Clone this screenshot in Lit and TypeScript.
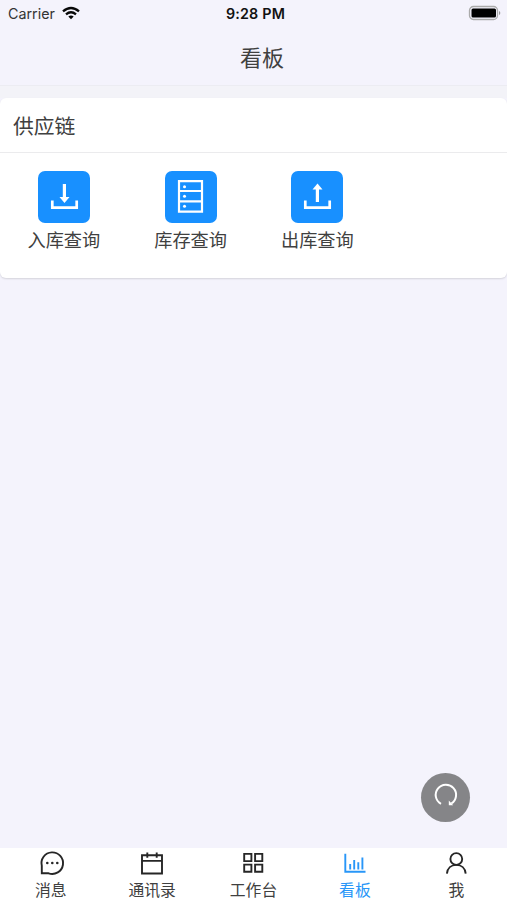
import { LitElement, html, svg, css } from "lit";
import { customElement } from "lit/decorators.js";
import { classMap } from "lit/directives/class-map.js";

const apps = [
  {
    label: "入库查询",
    icon: svg`<path d="M26.4 13v15" stroke-width="3.2"/><path d="M21.500 26h10L26.500 32z" fill="#fff" stroke="none"/><path d="M14.300 29.500v7.200h24.400v-7.200" stroke-width="2.700"/>`,
  },
  {
    label: "库存查询",
    icon: svg`<path d="M14 10.200h23v30.400h-23zM14 20h23M14 30.300h23" stroke-width="2.200"/><g fill="#fff" stroke="none"><circle cx="19.500" cy="15.700" r="1.500"/><circle cx="19.500" cy="25.300" r="1.500"/><circle cx="19.500" cy="35.200" r="1.500"/></g>`,
  },
  {
    label: "出库查询",
    icon: svg`<path d="M26.400 16v15" stroke-width="3.200"/><path d="M21.500 18.500h10L26.500 12.500z" fill="#fff" stroke="none"/><path d="M14.300 29.500v7.200h24.400v-7.200" stroke-width="2.700"/>`,
  },
];

const tabs = [
  {
    label: "消息",
    icon: svg`<path d="M4.800 23.300V15.800A10.800 10.800 0 1 1 11.600 23.300z"/><g fill="currentColor" stroke="none"><circle cx="10.300" cy="13" r="1.300"/><circle cx="15.300" cy="13" r="1.300"/><circle cx="20.300" cy="13" r="1.300"/></g>`,
  },
  {
    label: "通讯录",
    icon: svg`<path d="M4 5.300h20v18.200H4zM4 10.900h20M9.300 2.500v5.200M18.700 2.500v5.200"/>`,
  },
  {
    label: "工作台",
    icon: svg`<path d="M5.200 3.900h7.200v7.200H5.200zM16.100 3.900h7.200v7.200h-7.200zM5.200 14.600h7.200v7.200H5.200zM16.100 14.600h7.200v7.200h-7.200z"/>`,
  },
  {
    label: "看板",
    active: true,
    icon: svg`<path d="M4.300 3.800v17.900h20.200M9.200 14v5.500M13.200 10v9.500M17.300 12.200v7.300M21.400 7.500v12"/>`,
  },
  {
    label: "我",
    icon: svg`<circle cx="14.300" cy="9" r="5.900"/><path d="M4.900 23.700C5.400 18 9.300 14.900 14.300 14.900s8.900 3.100 9.400 8.800"/>`,
  },
];

@customElement("app-root")
export class AppRoot extends LitElement {
  static styles = css`
    :host {
      display: flex;
      flex-direction: column;
      position: relative;
      height: 900px;
      overflow: hidden;
      background: #f4f3fc;
      color: #404040;
      font-family: "Noto Sans CJK SC", sans-serif;
    }
    svg { display: block; fill: none; stroke: currentColor; }
    .status {
      display: grid;
      grid-template-columns: 1fr auto 1fr;
      align-items: center;
      height: 26px;
      padding: 0 6px 0 8px;
      box-sizing: border-box;
      font: 14.3px Inter, sans-serif;
    }
    .carrier { display: flex; align-items: center; gap: 7px; color: #333; }
    .time { font-weight: 600; color: #111; letter-spacing: 0.2px; padding-left: 2px; }
    .battery { justify-self: end; }
    .title {
      height: 60px;
      line-height: 60px;
      box-sizing: border-box;
      padding-left: 17px;
      border-bottom: 1px solid #ececf2;
      text-align: center;
      font-size: 22px;
    }
    .content { flex: 1; padding-top: 12px; background: linear-gradient(#f3f3f8 12px, #f4f3fc 12px); }
    .card {
      height: 180px;
      border-radius: 6px;
      background: #fff;
      box-shadow: 0 1px 2px #0002;
    }
    .heading {
      height: 55px;
      box-sizing: border-box;
      padding-left: 13px;
      border-bottom: 1px solid #ebebed;
      font-size: 20.800px;
      line-height: 55px;
    }
    .apps { display: grid; grid-template-columns: repeat(4, 1fr); padding-top: 18px; }
    .app { display: flex; flex-direction: column; align-items: center; font-size: 18.200px; line-height: 24px; gap: 4px; padding-left: 1px; }
    .tile { width: 52px; height: 52px; border-radius: 7px; background: #1890ff; color: #fff; }
    .refresh {
      position: absolute;
      right: 37px;
      bottom: 78px;
      width: 49px;
      height: 49px;
      border-radius: 50%;
      background: #858588;
      color: #fff;
    }
    .tabs { display: grid; grid-template-columns: repeat(5, 1fr); height: 52px; background: #fff; }
    .tab { display: flex; flex-direction: column; align-items: center; padding-top: 2px; font-size: 15.800px; line-height: 22px; gap: 2px; }
    .tab svg { stroke-width: 1.900; color: #262626; }
    .tab.active, .tab.active svg { color: #2896f8; }
  `;

  render() {
    return html`
      <div class="status">
        <div class="carrier">
          <span>Carrier</span>
          <svg width="18" height="14" viewBox="0 0 18 14" color="#080808" stroke-width="2.300">
            <path d="M1 5.400Q9-1.500 17 5.400M4 8.400Q9 4.200 14 8.400" />
            <path d="M6.300 10.500Q9 8.300 11.700 10.500L9 13.200z" fill="#080808" stroke="none" />
          </svg>
        </div>
        <span class="time">9:28 PM</span>
        <svg class="battery" width="33" height="16" viewBox="0 0 33 16">
          <rect x="1.500" y="1.500" width="28" height="13" rx="4" stroke="#aaa" stroke-width="1.300" />
          <rect x="3.500" y="3.500" width="24.500" height="9" rx="1.500" fill="#000" stroke="none" />
          <path d="M31 6v4q1.300-.5 1.300-2T31 6z" fill="#999" stroke="none" />
        </svg>
      </div>
      <div class="title">看板</div>
      <main class="content">
        <section class="card">
          <div class="heading">供应链</div>
          <div class="apps">
            ${apps.map((a) => html`<div class="app">
              <svg class="tile" viewBox="0 0 52 52">${a.icon}</svg><span>${a.label}</span>
            </div>`)}
          </div>
        </section>
      </main>
      <div class="refresh">
        <svg width="49" height="49" viewBox="0 0 49 49" stroke-width="2">
          <path d="M20 30.800A10.200 10.200 0 1 1 30.300 30.500" />
          <path d="M27.800 27.500v4.700h4.400z" fill="#fff" stroke="none" />
        </svg>
      </div>
      <nav class="tabs">
        ${tabs.map((t) => html`<div class=${classMap({ tab: true, active: !!t.active })}>
          <svg width="28" height="27" viewBox="0 0 28 27">${t.icon}</svg><span>${t.label}</span>
        </div>`)}
      </nav>
    `;
  }
}
